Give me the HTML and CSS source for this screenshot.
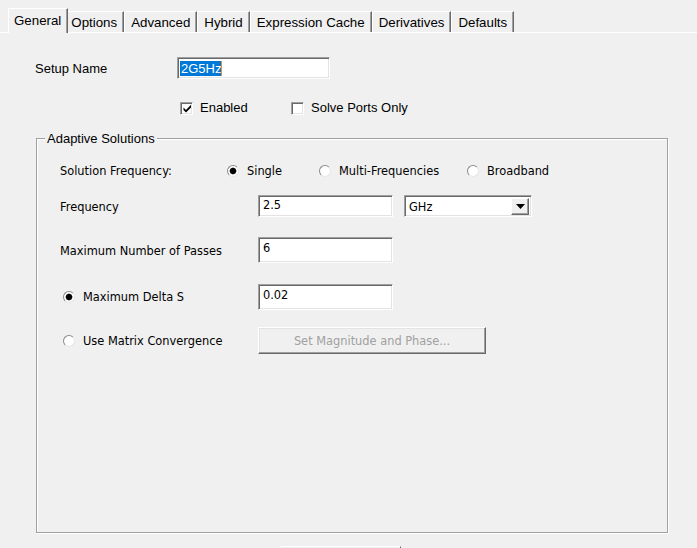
FILE: index.html
```html
<!DOCTYPE html>
<html>
<head>
<meta charset="utf-8">
<link rel="stylesheet" href="styles.css">
</head>
<body>
<div class="window">
  <div class="tabs">
    <div class="tab active">General</div>
    <div class="tab">Options</div>
    <div class="tab">Advanced</div>
    <div class="tab">Hybrid</div>
    <div class="tab">Expression Cache</div>
    <div class="tab">Derivatives</div>
    <div class="tab">Defaults</div>
  </div>
  <div class="panel">
    <div class="setup-row">
      <span class="label-lg">Setup Name</span>
      <div class="input name-input"><span class="sel">2G5Hz</span><span class="caret"></span></div>
    </div>
    <div class="check-row">
      <div class="check first">
        <span class="box"><svg width="9" height="9" viewBox="0 0 9 9"><path d="M0.5 3.6 L3 6 L8 0.8 L8 3.4 L3 8.4 L0.5 6 Z" fill="#000"/></svg></span>
        <span class="label-lg">Enabled</span>
      </div>
      <div class="check">
        <span class="box"></span>
        <span class="label-lg">Solve Ports Only</span>
      </div>
    </div>
    <div class="group">
      <span class="legend">Adaptive Solutions</span>
      <div class="grow r1">
        <span class="lbl sf-lbl">Solution Frequency:</span>
        <div class="opt opt-single"><span class="radio on"></span><span class="lbl">Single</span></div>
        <div class="opt opt-multi"><span class="radio"></span><span class="lbl">Multi-Frequencies</span></div>
        <div class="opt"><span class="radio"></span><span class="lbl">Broadband</span></div>
      </div>
      <div class="grow r2">
        <span class="lbl col-lbl">Frequency</span>
        <div class="input field short">2.5</div>
        <div class="select">
          <span class="select-text">GHz</span>
          <span class="drop"><svg width="9" height="5" viewBox="0 0 9 5"><path d="M0 0 H9 L4.5 5 Z" fill="#000"/></svg></span>
        </div>
      </div>
      <div class="grow r3">
        <span class="lbl col-lbl">Maximum Number of Passes</span>
        <div class="input field tall">6</div>
      </div>
      <div class="grow r4">
        <div class="col-lbl opt-lbl"><span class="radio on"></span><span class="lbl">Maximum Delta S</span></div>
        <div class="input field tall">0.02</div>
      </div>
      <div class="grow r5">
        <div class="col-lbl opt-lbl"><span class="radio"></span><span class="lbl">Use Matrix Convergence</span></div>
        <div class="button disabled">Set Magnitude and Phase...</div>
      </div>
    </div>
    <div class="peek"></div>
  </div>
</div>
</body>
</html>
```

FILE: styles.css
```css
html, body {
  margin: 0;
  padding: 0;
  background: #f0f0f0;
}
.window {
  width: 697px;
  height: 548px;
  overflow: hidden;
  background: #f0f0f0;
  font-family: "Liberation Sans", Arial, sans-serif;
  color: #000;
}
.tabs {
  display: flex;
  align-items: flex-end;
  height: 32px;
  padding-left: 10px;
  box-sizing: border-box;
}
.tab {
  height: 21px;
  box-sizing: border-box;
  padding: 0 6px 0 6px;
  border-top: 1px solid #fff;
  border-left: 1px solid #fff;
  border-right: 1px solid #696969;
  box-shadow: inset -1px 0 0 #a0a0a0;
  font-size: 13.3px;
  line-height: 21px;
  white-space: nowrap;
}
.tab.active {
  height: 25px;
  margin: 0 -2px -1px -2px;
  padding: 0 6px 0 5px;
  line-height: 23px;
  background: #f0f0f0;
  position: relative;
  z-index: 1;
}
.tab.active + .tab {
  border-left: none;
  padding-left: 5px;
}
.panel {
  border-top: 1px solid #fff;
}
.label-lg {
  font-size: 13px;
  line-height: 16px;
}
.setup-row {
  display: flex;
  align-items: center;
  margin-top: 24px;
  padding-left: 35px;
}
.setup-row .label-lg {
  width: 142px;
  padding-top: 1px;
}
.input {
  box-sizing: border-box;
  background: #fff;
  border: 1px solid;
  border-color: #a0a0a0 #fff #fff #a0a0a0;
  box-shadow: inset 1px 1px 0 #696969, inset -1px -1px 0 #e3e3e3;
}
.name-input {
  width: 153px;
  height: 22px;
  padding: 3px 0 0 2px;
  font-size: 13px;
  line-height: 15px;
  display: flex;
  align-items: flex-start;
}
.sel {
  background: #0078d7;
  color: #fff;
  padding: 0 0 0 1px;
}
.caret {
  width: 1px;
  height: 15px;
  background: #f08a24;
}
.check-row {
  display: flex;
  align-items: center;
  margin-top: 21px;
  padding-left: 180px;
  height: 16px;
}
.check {
  display: flex;
  align-items: center;
  gap: 7px;
}
.check.first {
  width: 111px;
}
.box {
  width: 13px;
  height: 13px;
  box-sizing: border-box;
  background: #fff;
  border: 1px solid;
  border-color: #a0a0a0 #fff #fff #a0a0a0;
  box-shadow: inset 1px 1px 0 #696969, inset -1px -1px 0 #e3e3e3;
  display: flex;
  align-items: center;
  justify-content: center;
}
.box svg {
  margin: 0 0 0 1px;
}
.group {
  position: relative;
  margin: 22px 0 0 36px;
  width: 632px;
  height: 395px;
  box-sizing: border-box;
  border: 1px solid #a0a0a0;
  box-shadow: 1px 1px 0 #fff, inset 1px 1px 0 #fff;
  padding-left: 23px;
}
.legend {
  position: absolute;
  left: 8px;
  top: -8px;
  padding: 0 2px;
  background: #f0f0f0;
  font-size: 13px;
  line-height: 16px;
}
.lbl {
  font-family: "DejaVu Sans", Tahoma, sans-serif;
  font-size: 11.4px;
  line-height: 14px;
  white-space: nowrap;
}
.grow {
  display: flex;
  align-items: center;
}
.r1 { margin-top: 23px; height: 18px; }
.r2 { margin-top: 15px; height: 22px; }
.r3 { margin-top: 20px; height: 26px; }
.r4 { margin-top: 21px; height: 26px; }
.r5 { margin-top: 17px; height: 27px; }
.r2 .col-lbl { padding-top: 2px; }
.r3 .col-lbl { padding-top: 1px; }
.sf-lbl {
  width: 167px;
}
.col-lbl {
  width: 198px;
  flex-shrink: 0;
}
.opt {
  display: flex;
  align-items: center;
  gap: 8px;
}
.opt-single { width: 92px; }
.opt-multi { width: 148px; }
.opt-lbl {
  display: flex;
  align-items: center;
  gap: 8px;
  padding-left: 3px;
  box-sizing: border-box;
}
.radio {
  width: 12px;
  height: 12px;
  box-sizing: border-box;
  border-radius: 50%;
  border: 1px solid;
  border-color: #8a8a8a #e6e6e6 #e6e6e6 #8a8a8a;
  background: #fff;
  flex-shrink: 0;
}
.radio.on {
  background: radial-gradient(circle, #000 0, #000 2.6px, #444 3.1px, #fff 3.8px);
}
.field {
  font-family: "DejaVu Sans", Tahoma, sans-serif;
  font-size: 11.4px;
  padding-left: 4px;
  width: 135px;
}
.field.short {
  height: 22px;
  line-height: 19px;
}
.field.tall {
  height: 26px;
  line-height: 20px;
}
.select {
  margin-left: 11px;
  width: 128px;
  height: 22px;
  box-sizing: border-box;
  background: #fff;
  border: 1px solid;
  border-color: #a0a0a0 #fff #fff #a0a0a0;
  box-shadow: inset 1px 1px 0 #696969, inset -1px -1px 0 #e3e3e3;
  display: flex;
  align-items: center;
  justify-content: space-between;
  padding: 0 2px 0 4px;
}
.select-text {
  font-family: "DejaVu Sans", Tahoma, sans-serif;
  font-size: 11.4px;
  padding-top: 2px;
}
.drop {
  width: 18px;
  height: 17px;
  box-sizing: border-box;
  background: #f0f0f0;
  border: 1px solid;
  border-color: #fff #696969 #696969 #fff;
  box-shadow: inset -1px -1px 0 #a0a0a0;
  display: flex;
  align-items: center;
  justify-content: center;
}
.button {
  width: 228px;
  height: 27px;
  box-sizing: border-box;
  background: #f0f0f0;
  border: 1px solid;
  border-color: #fff #696969 #696969 #fff;
  box-shadow: inset -1px -1px 0 #a0a0a0, inset 1px 1px 0 #e3e3e3;
  font-family: "DejaVu Sans", Tahoma, sans-serif;
  font-size: 11.4px;
  display: flex;
  align-items: center;
  justify-content: center;
}
.button.disabled {
  color: #a0a0a0;
}
.peek {
  margin: 13px 0 0 281px;
  width: 120px;
  height: 20px;
  box-sizing: border-box;
  border-top: 1px solid #fff;
  border-left: 1px solid #fff;
  border-right: 1px solid #696969;
}
```
